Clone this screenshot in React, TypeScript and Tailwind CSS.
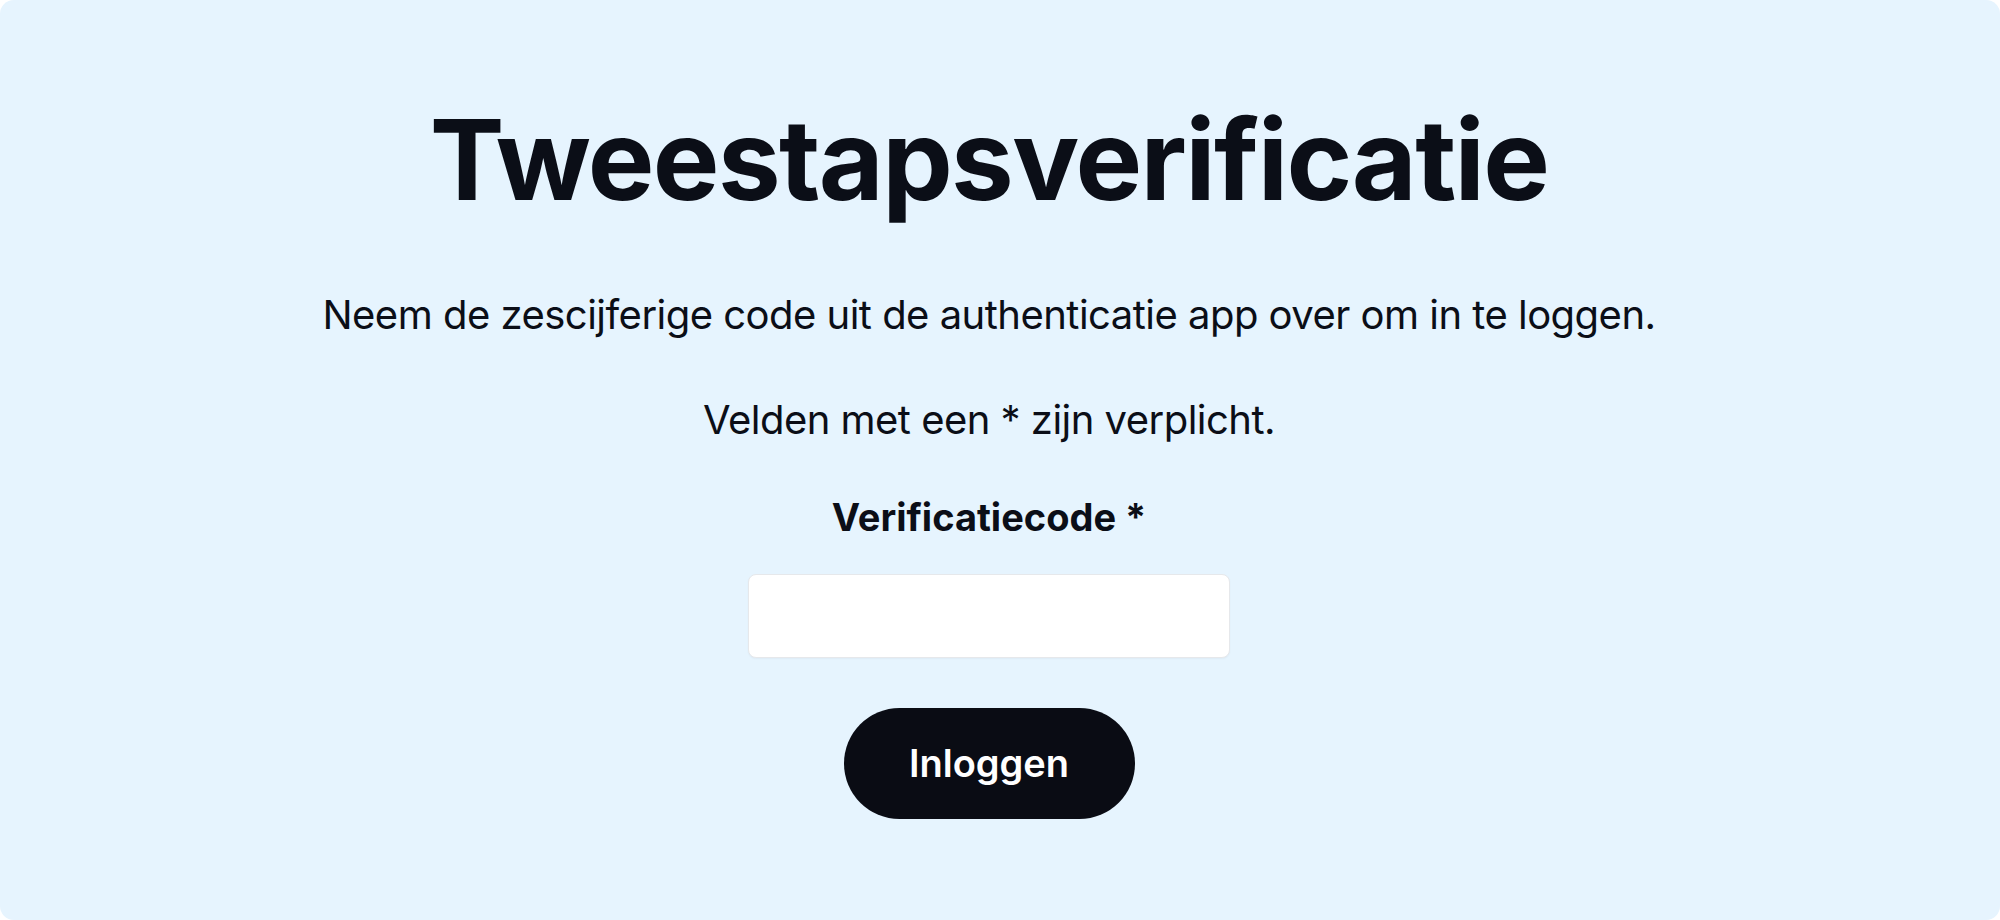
import React, { useState } from 'react';

const font = { fontFamily: 'Inter, "Noto Sans", sans-serif' };

const App: React.FC = () => {
  const [code, setCode] = useState('');

  return (
    <div className="bg-white min-h-[920px] w-full" style={font}>
      <div className="h-[920px] w-full rounded-[14px] bg-[#e6f4fe] text-[#0b0e17]">
        <div className="flex flex-col items-center pt-[103px] pr-[22px]">
          <h1 className="text-[112px] font-bold leading-none tracking-[-0.015em]">Tweestapsverificatie</h1>
          <p className="mt-[70px] text-[40px] leading-[60px] tracking-[-0.013em]">
            Neem de zescijferige code uit de authenticatie app over om in te loggen.
          </p>
          <p className="mt-[45px] text-[40px] leading-[60px] tracking-[-0.013em]">Velden met een * zijn verplicht.</p>
          <label htmlFor="code" className="mt-[39px] text-[38px] font-bold leading-[56px]">
            Verificatiecode *
          </label>
          <input
            id="code"
            value={code}
            onChange={e => setCode(e.target.value)}
            className="mt-[29px] h-[84px] w-[482px] rounded-[8px] border border-[#e6e8eb] bg-white px-4 text-[36px] shadow-[0_1px_2px_rgba(0,0,0,0.04)] outline-none"
          />
          <button className="mt-[50px] h-[111px] w-[291px] rounded-full bg-[#0a0c14] text-[38px] font-semibold text-white">
            Inloggen
          </button>
        </div>
      </div>
    </div>
  );
};

export default App;
